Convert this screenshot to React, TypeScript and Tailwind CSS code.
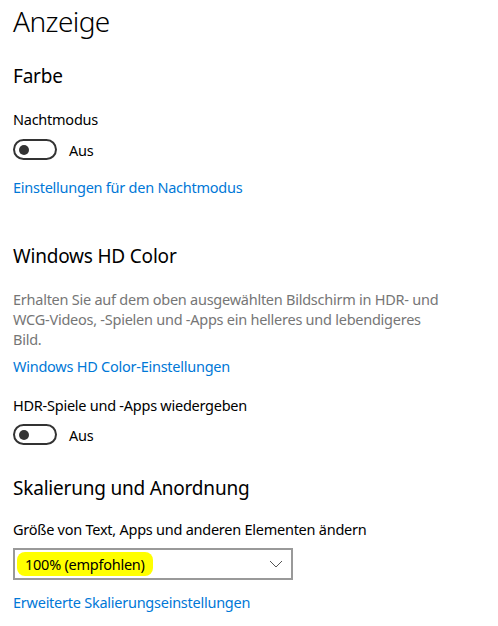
import React from 'react';

const font = { fontFamily: '"Noto Sans", "Open Sans", sans-serif' };

const Toggle: React.FC<{ label: string }> = ({ label }) => (
  <div className="flex items-center h-[21px]">
    <div className="w-[44px] h-[21px] rounded-full border-2 border-[#333] flex items-center pl-[4px]">
      <div className="w-[10px] h-[10px] rounded-full bg-[#333]" />
    </div>
    <span className="ml-[12px] text-[14.5px] tracking-[-0.25px] leading-[20px] text-black">{label}</span>
  </div>
);

const Link: React.FC<{ children: React.ReactNode; className?: string }> = ({ children, className }) => (
  <a href="#" className={`block text-[14.5px] tracking-[-0.25px] leading-[20px] text-[#0078d7] ${className ?? ''}`}>
    {children}
  </a>
);

export default function App() {
  return (
    <div className="w-[498px] h-[626px] bg-white overflow-hidden px-[13px]" style={font}>
      <h1 className="pt-[3px] text-[28px] tracking-[-0.6px] leading-[36px] font-light text-black">Anzeige</h1>

      <h2 className="mt-[23px] text-[19px] tracking-[-0.2px] leading-[28px] text-black">Farbe</h2>
      <p className="mt-[19px] text-[14.5px] tracking-[-0.25px] leading-[20px] text-black">Nachtmodus</p>
      <div className="mt-[10px]">
        <Toggle label="Aus" />
      </div>
      <Link className="mt-[17px]">Einstellungen für den Nachtmodus</Link>

      <h2 className="mt-[45px] text-[19px] tracking-[-0.2px] leading-[28px] text-black">Windows HD Color</h2>
      <p className="mt-[19px] text-[14.5px] tracking-[-0.25px] leading-[20px] text-[#767676]">
        Erhalten Sie auf dem oben ausgewählten Bildschirm in HDR- und
        <br />
        WCG-Videos, -Spielen und -Apps ein helleres und lebendigeres
        <br />
        Bild.
      </p>
      <Link className="mt-[7px]">Windows HD Color-Einstellungen</Link>
      <p className="mt-[19px] text-[14.5px] tracking-[-0.25px] leading-[20px] text-black">HDR-Spiele und -Apps wiedergeben</p>
      <div className="mt-[9px]">
        <Toggle label="Aus" />
      </div>

      <h2 className="mt-[29px] text-[19px] tracking-[-0.2px] leading-[28px] text-black">Skalierung und Anordnung</h2>
      <p className="mt-[17px] text-[14.5px] tracking-[-0.25px] leading-[20px] text-black">
        Größe von Text, Apps und anderen Elementen ändern
      </p>
      <div className="mt-[9px] w-[280px] h-[32px] border-2 border-[#999] flex items-center justify-between pl-[2px] pr-[8px]">
        <span className="bg-[#ffff00] rounded-[8px] px-[8px] text-[14.5px] tracking-[-0.25px] leading-[24px] text-black">
          100% (empfohlen)
        </span>
        <svg width="14" height="8" viewBox="0 0 14 8" fill="none">
          <path d="M1 1l6 6 6-6" stroke="#555" strokeWidth="1" />
        </svg>
      </div>
      <Link className="mt-[12px]">Erweiterte Skalierungseinstellungen</Link>
    </div>
  );
}
